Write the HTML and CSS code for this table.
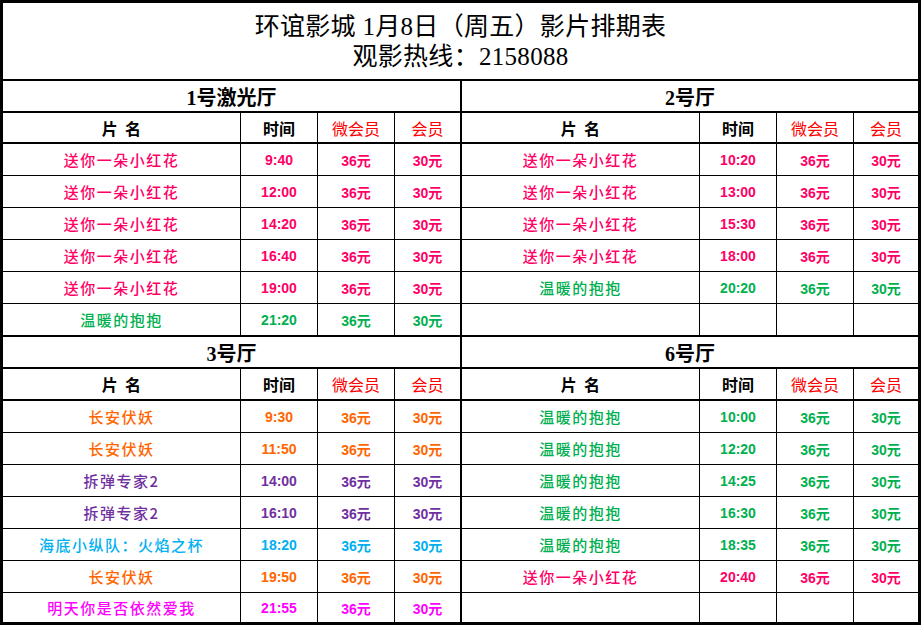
FILE: index.html
```html
<!DOCTYPE html>
<html lang="zh-CN">
<head>
<meta charset="utf-8">
<title>环谊影城 影片排期表</title>
<link rel="stylesheet" href="styles.css">
</head>
<body>
<table class="sheet">
  <colgroup>
    <col class="c-name"><col class="c-time"><col class="c-price"><col class="c-mem">
    <col class="c-name"><col class="c-time"><col class="c-price"><col class="c-mem2">
  </colgroup>
  <tbody>
    <tr class="r-title">
      <td colspan="8" class="title last">
        <div>环谊影城 1月8日（周五）影片排期表</div>
        <div>观影热线：2158088</div>
      </td>
    </tr>
    <tr class="r-hall">
      <td colspan="4" class="hall mid">1号激光厅</td>
      <td colspan="4" class="hall last">2号厅</td>
    </tr>
    <tr class="r-head">
      <td class="hd">片&nbsp;&nbsp;名</td><td class="hd">时间</td><td class="hd red">微会员</td><td class="hd red mid">会员</td>
      <td class="hd">片&nbsp;&nbsp;名</td><td class="hd">时间</td><td class="hd red">微会员</td><td class="hd red last">会员</td>
    </tr>
    <tr class="r-data pink">
      <td class="nm">送你一朵小红花</td><td class="num">9:40</td><td class="num">36元</td><td class="num mid">30元</td>
      <td class="nm">送你一朵小红花</td><td class="num">10:20</td><td class="num">36元</td><td class="num last">30元</td>
    </tr>
    <tr class="r-data pink">
      <td class="nm">送你一朵小红花</td><td class="num">12:00</td><td class="num">36元</td><td class="num mid">30元</td>
      <td class="nm">送你一朵小红花</td><td class="num">13:00</td><td class="num">36元</td><td class="num last">30元</td>
    </tr>
    <tr class="r-data pink">
      <td class="nm">送你一朵小红花</td><td class="num">14:20</td><td class="num">36元</td><td class="num mid">30元</td>
      <td class="nm">送你一朵小红花</td><td class="num">15:30</td><td class="num">36元</td><td class="num last">30元</td>
    </tr>
    <tr class="r-data pink">
      <td class="nm">送你一朵小红花</td><td class="num">16:40</td><td class="num">36元</td><td class="num mid">30元</td>
      <td class="nm">送你一朵小红花</td><td class="num">18:00</td><td class="num">36元</td><td class="num last">30元</td>
    </tr>
    <tr class="r-data">
      <td class="nm pink">送你一朵小红花</td><td class="num pink">19:00</td><td class="num pink">36元</td><td class="num pink mid">30元</td>
      <td class="nm green">温暖的抱抱</td><td class="num green">20:20</td><td class="num green">36元</td><td class="num green last">30元</td>
    </tr>
    <tr class="r-data r-end">
      <td class="nm green">温暖的抱抱</td><td class="num green">21:20</td><td class="num green">36元</td><td class="num green mid">30元</td>
      <td class="nm"></td><td class="num"></td><td class="num"></td><td class="num last"></td>
    </tr>
    <tr class="r-hall">
      <td colspan="4" class="hall mid">3号厅</td>
      <td colspan="4" class="hall last">6号厅</td>
    </tr>
    <tr class="r-head r-head2">
      <td class="hd">片&nbsp;&nbsp;名</td><td class="hd">时间</td><td class="hd red">微会员</td><td class="hd red mid">会员</td>
      <td class="hd">片&nbsp;&nbsp;名</td><td class="hd">时间</td><td class="hd red">微会员</td><td class="hd red last">会员</td>
    </tr>
    <tr class="r-data">
      <td class="nm orange">长安伏妖</td><td class="num orange">9:30</td><td class="num orange">36元</td><td class="num orange mid">30元</td>
      <td class="nm green">温暖的抱抱</td><td class="num green">10:00</td><td class="num green">36元</td><td class="num green last">30元</td>
    </tr>
    <tr class="r-data">
      <td class="nm orange">长安伏妖</td><td class="num orange">11:50</td><td class="num orange">36元</td><td class="num orange mid">30元</td>
      <td class="nm green">温暖的抱抱</td><td class="num green">12:20</td><td class="num green">36元</td><td class="num green last">30元</td>
    </tr>
    <tr class="r-data">
      <td class="nm purple">拆弹专家2</td><td class="num purple">14:00</td><td class="num purple">36元</td><td class="num purple mid">30元</td>
      <td class="nm green">温暖的抱抱</td><td class="num green">14:25</td><td class="num green">36元</td><td class="num green last">30元</td>
    </tr>
    <tr class="r-data">
      <td class="nm purple">拆弹专家2</td><td class="num purple">16:10</td><td class="num purple">36元</td><td class="num purple mid">30元</td>
      <td class="nm green">温暖的抱抱</td><td class="num green">16:30</td><td class="num green">36元</td><td class="num green last">30元</td>
    </tr>
    <tr class="r-data">
      <td class="nm cyan">海底小纵队：火焰之杯</td><td class="num cyan">18:20</td><td class="num cyan">36元</td><td class="num cyan mid">30元</td>
      <td class="nm green">温暖的抱抱</td><td class="num green">18:35</td><td class="num green">36元</td><td class="num green last">30元</td>
    </tr>
    <tr class="r-data">
      <td class="nm orange">长安伏妖</td><td class="num orange">19:50</td><td class="num orange">36元</td><td class="num orange mid">30元</td>
      <td class="nm pink">送你一朵小红花</td><td class="num pink">20:40</td><td class="num pink">36元</td><td class="num pink last">30元</td>
    </tr>
    <tr class="r-data r-bottom">
      <td class="nm magenta">明天你是否依然爱我</td><td class="num magenta">21:55</td><td class="num magenta">36元</td><td class="num magenta mid">30元</td>
      <td class="nm"></td><td class="num"></td><td class="num"></td><td class="num last"></td>
    </tr>
  </tbody>
</table>
</body>
</html>
```

FILE: styles.css
```css
html, body {
  margin: 0;
  padding: 0;
  background: #ffffff;
}

.sheet {
  border-collapse: separate;
  border-spacing: 0;
  table-layout: fixed;
  width: 921px;
  border: 3px solid #000;
  font-family: "Liberation Serif", "Noto Sans CJK SC", serif;
  color: #000;
}

.c-name { width: 238px; }
.c-time { width: 77px; }
.c-price { width: 77px; }
.c-mem { width: 67px; }
.c-mem2 { width: 64px; }

.sheet td {
  padding: 0;
  box-sizing: border-box;
  border-right: 1px solid #000;
  border-bottom: 1px solid #000;
  text-align: center;
  vertical-align: middle;
  white-space: nowrap;
  overflow: hidden;
}

.sheet td.mid { border-right-width: 2px; }
.sheet td.last { border-right: 0; }

.r-title { height: 78px; }
.r-title td { border-bottom-width: 2px; }

.sheet td.title {
  font-size: 25px;
  line-height: 30px;
  padding-top: 9px;
  vertical-align: top;
  letter-spacing: 0.3px;
}

.r-hall { height: 32px; }
.r-hall td { border-bottom-width: 2px; }

.hall {
  font-size: 20px;
  font-weight: bold;
}

.r-head { height: 31px; }
.r-head2 { height: 32px; }
.r-head td { border-bottom-width: 2px; }

.hd {
  font-family: "Noto Sans CJK SC", sans-serif;
  font-size: 16px;
  font-weight: bold;
}

.hd.red {
  color: #ff0000;
  font-weight: normal;
}

.r-data { height: 32px; }
.r-end { height: 33px; }
.r-end td { border-bottom-width: 2px; }
.r-bottom { height: 29px; }
.r-bottom td { border-bottom: 0; }

.nm {
  font-family: "Noto Sans CJK SC", sans-serif;
  font-size: 15px;
  font-weight: 500;
  letter-spacing: 1.5px;
  padding-top: 2px;
}

.num {
  font-family: "Liberation Sans", "Noto Sans CJK SC", sans-serif;
  font-size: 14px;
  font-weight: bold;
  padding-top: 2px;
}

.pink { color: #ff0066; }
.green { color: #00b050; }
.orange { color: #ff6600; }
.purple { color: #7030a0; }
.cyan { color: #00b0f0; }
.magenta { color: #ff00ff; }
```
